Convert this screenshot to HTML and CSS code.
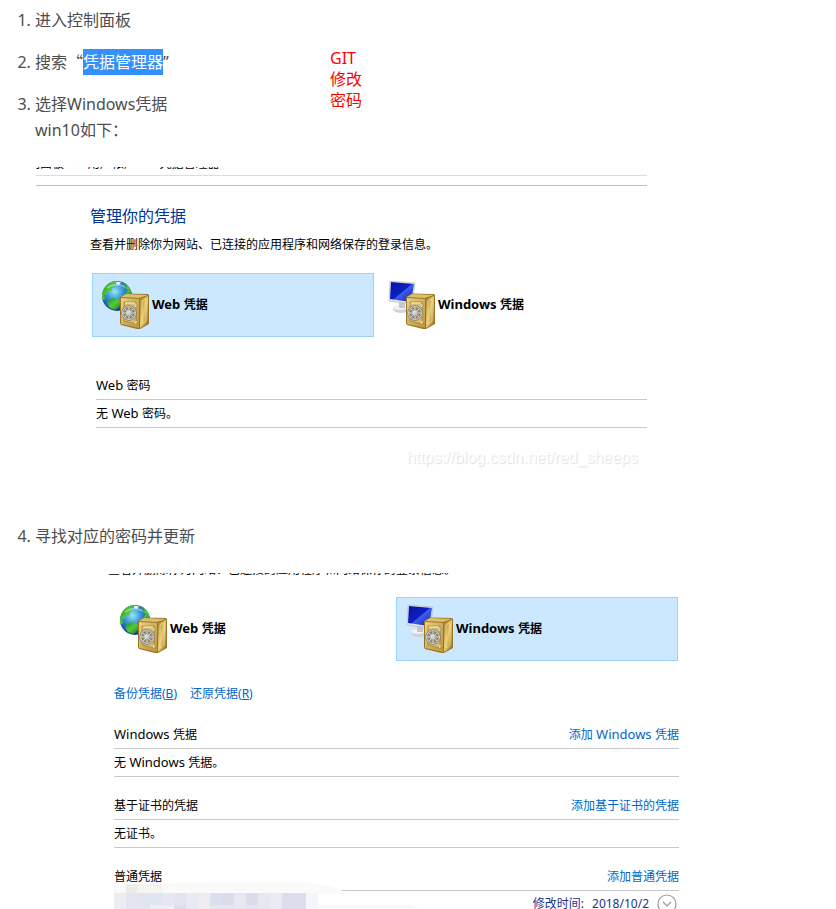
FILE: index.html
```html
<!DOCTYPE html>
<html lang="zh-CN">
<head>
<meta charset="utf-8">
<title>GIT 修改密码</title>
<link rel="stylesheet" href="styles.css">
</head>
<body>
<svg class="defs" aria-hidden="true">
  <defs>
    <radialGradient id="sea" cx=".42" cy=".35" r=".65"><stop offset="0" stop-color="#9be6f8"/><stop offset=".45" stop-color="#3193d6"/><stop offset="1" stop-color="#12368f"/></radialGradient>
    <linearGradient id="land" x1="0" y1="0" x2="1" y2="1"><stop offset="0" stop-color="#1c8f2c"/><stop offset=".5" stop-color="#55c93a"/><stop offset="1" stop-color="#157b27"/></linearGradient>
    <linearGradient id="front" x1="0" y1="0" x2="1" y2="1"><stop offset="0" stop-color="#ead489"/><stop offset=".5" stop-color="#d0b05a"/><stop offset="1" stop-color="#bd963c"/></linearGradient>
    <linearGradient id="side" x1="0" y1="0" x2="1" y2="1"><stop offset="0" stop-color="#a98029"/><stop offset=".5" stop-color="#e6ca74"/><stop offset="1" stop-color="#94701f"/></linearGradient>
    <linearGradient id="screen" x1="0" y1="0" x2="1" y2="1"><stop offset="0" stop-color="#0512a0"/><stop offset=".5" stop-color="#101fc6"/><stop offset=".52" stop-color="#3c62ec"/><stop offset="1" stop-color="#0a16b2"/></linearGradient>
    <linearGradient id="metal" x1="0" y1="0" x2="1" y2="1"><stop offset="0" stop-color="#fafafa"/><stop offset="1" stop-color="#a6abb0"/></linearGradient>
    <clipPath id="disc"><circle cx="16" cy="16" r="15"/></clipPath>
    <symbol id="safe" viewBox="0 0 50 50">
      <path d="M19 17 25 13.500 47 14 48 15V44L39 49 36 49 20 45 19 43Z" fill="#9b7424"/>
      <path d="M20 17 25 14 47 15 38 18Z" fill="#d9bf70"/>
      <path d="M20 18 38 19V48L20 44Z" fill="url(#front)"/>
      <path d="M39 19 47 16V43L39 48Z" fill="url(#side)"/>
      <path d="M41 21 45 19V41L41 44Z" fill="none" stroke="#f8e7a6" stroke-width=".6"/>
      <path d="M23 22 35 22V44L23 41Z" fill="#d9be69" stroke="#a78235" stroke-width=".8"/>
      <path d="M24 23h10" stroke="#fff0b9"/>
      <path d="M35 24v3M35 41v3" stroke="#ddd" stroke-width="1.600"/>
      <path d="M36 24v3M36 42v3" stroke="#8b8470" stroke-width=".8"/>
      <circle cx="28" cy="33" r="6.500" fill="#a18d55" stroke="#777c80" stroke-width="2.400"/>
      <circle cx="28" cy="33" r="6.500" fill="none" stroke="#c8cbce" stroke-width="1.200"/>
      <path d="M28 27v12M22 33h12M24 29l8 8M32 29l-8 8" stroke="#d8dadc"/>
      <circle cx="28" cy="33" r="3" fill="url(#metal)" stroke="#92979a" stroke-width=".6"/>
    </symbol>
    <symbol id="web" viewBox="0 0 50 50">
      <circle cx="16" cy="16" r="15" fill="url(#sea)"/>
      <g clip-path="url(#disc)" fill="url(#land)">
        <path d="M1 17V8L7 1 16 0 14 3 12 4 14 6 11 8 10 11 7 12 5 15 3 15 4 19 1 21Z"/>
        <path d="M22 1 31 8 32 19 28 17 25 13 27 10 24 8 25 5 21 4Z"/>
        <path d="M8 20 12 18 17 19 20 22 18 27 14 30 9 28 6 24Z"/>
        <path d="M15 2h5l-2 3-3-1Z" fill="#e8f7e8"/>
      </g>
      <path d="M6 8Q14 2 24 7" fill="none" stroke="#fff" stroke-opacity=".35" stroke-width="2"/>
      <use href="#safe" width="50" height="50"/>
    </symbol>
    <symbol id="win" viewBox="0 0 50 50">
      <ellipse cx="14" cy="29" rx="8" ry="4" fill="#cfd3d6"/>
      <ellipse cx="13" cy="27.500" rx="7" ry="2.500" fill="#f0f1f2"/>
      <path d="M12 21h6v7h-6z" fill="#c3c8cc"/>
      <path d="M3 1 28 3 25 24 2 21Z" fill="#e2e5e8" stroke="#aeb3b8" stroke-width=".6"/>
      <path d="M4 2 27 4 24 22 3 19Z" fill="url(#screen)"/>
      <use href="#safe" width="50" height="50"/>
    </symbol>
  </defs>
</svg>
<main class="page">
  <div class="intro">
    <ol class="steps">
      <li>进入控制面板</li>
      <li>搜索<span class="wide">“</span><mark>凭据管理器</mark>”</li>
      <li>选择Windows凭据<br>win10如下：</li>
    </ol>
    <p class="note">GIT<br>修改<br>密码</p>
  </div>

  <section class="shot shot-web">
    <div class="strip crumbs"><span>制面板</span><span>›</span><span>用户帐户</span><span>›</span><span>凭据管理器</span></div>
    <div class="bar"></div>
    <div class="content">
      <h2>管理你的凭据</h2>
      <p class="lead">查看并删除你为网站、已连接的应用程序和网络保存的登录信息。</p>
      <div class="tiles">
        <button class="tile selected" type="button"><svg class="icon" aria-hidden="true"><use href="#web"/></svg><span><span class="en">Web </span>凭据</span></button>
        <button class="tile" type="button"><svg class="icon" aria-hidden="true"><use href="#win"/></svg><span><span class="en">Windows </span>凭据</span></button>
      </div>
      <div class="group">
        <div class="row"><span><span class="en">Web </span>密码</span></div>
        <div class="row"><span>无<span class="en"> Web </span>密码。</span></div>
      </div>
    </div>
    <p class="watermark">https://blog.csdn.net/red_sheeps</p>
  </section>

  <ol class="steps" start="4">
    <li>寻找对应的密码并更新</li>
  </ol>

  <section class="shot shot-win">
    <div class="strip">查看并删除你为网站、已连接的应用程序和网络保存的登录信息。</div>
    <div class="tiles">
      <button class="tile" type="button"><svg class="icon" aria-hidden="true"><use href="#web"/></svg><span><span class="en">Web </span>凭据</span></button>
      <button class="tile selected" type="button"><svg class="icon" aria-hidden="true"><use href="#win"/></svg><span><span class="en">Windows </span>凭据</span></button>
    </div>
    <nav class="links"><a href="#">备份凭据(<u>B</u>)</a><a href="#">还原凭据(<u>R</u>)</a></nav>
    <div class="group">
      <div class="row"><span><span class="en">Windows </span>凭据</span><a href="#">添加<span class="en"> Windows </span>凭据</a></div>
      <div class="row"><span>无<span class="en"> Windows </span>凭据。</span></div>
    </div>
    <div class="group">
      <div class="row">基于证书的凭据<a href="#">添加基于证书的凭据</a></div>
      <div class="row">无证书。</div>
    </div>
    <div class="group masked">
      <div class="row">普通凭据<a href="#">添加普通凭据</a></div>
      <div class="entry">
        <span>修改时间:</span><span>2018/10/2</span>
        <button class="expand" type="button" aria-label="展开"><svg viewBox="0 0 20 20" aria-hidden="true"><circle cx="10" cy="10" r="9"/><path d="m6 8 4 4 4-4"/></svg></button>
      </div>
      <svg class="mosaic" viewBox="0 0 305 27" aria-hidden="true">
        <path d="M0 3 50 1 130 0H187L215 4 232 10V12H0Z" fill="#fafafa"/>
        <path d="M0 11H204V23H298L305 27H0Z" fill="#f8f8fa"/>
        <path d="M12 2h12v9H12z" fill="#ececea"/><path d="M24 2h24v9H24z" fill="#f4f4f2"/>
        <path d="M0 11h12v16H0z" fill="#ececf3"/><path d="M12 11h12v16H12z" fill="#e4e5f1"/>
        <path d="M24 11h12v12H24z" fill="#e1e5f2"/><path d="M36 11h12v12H36z" fill="#e1e4f1"/>
        <path d="M48 11h12v12H48z" fill="#e5e7f2"/><path d="M60 11h12v12H60z" fill="#e2e4f0"/>
        <path d="M72 11h12v12H72z" fill="#e8e9f3"/><path d="M84 11h12v16H84z" fill="#eeebf1"/>
        <path d="M96 11h12v12H96z" fill="#d9e1ef"/><path d="M108 11h12v12h-12z" fill="#d9dcea"/>
        <path d="M120 11h12v16h-12z" fill="#e6e8f2"/><path d="M132 11h12v12h-12z" fill="#dadcec"/>
        <path d="M144 11h12v16h-12z" fill="#e6e8f2"/><path d="M156 11h12v16h-12z" fill="#ebecf3"/>
        <path d="M168 11h24v16h-24z" fill="#dcdded"/><path d="M192 11h12v16h-12z" fill="#f5f6fa"/>
        <path d="M24 23h12v4H24z" fill="#e4e5f1"/><path d="M36 23h24v4H36z" fill="#eeeff6"/>
        <path d="M60 23h12v4H60z" fill="#dfdfe9"/><path d="M72 23h12v4H72z" fill="#e9e9f2"/>
        <path d="M96 23h24v4H96z" fill="#e5e6f0"/><path d="M132 23h12v4h-12z" fill="#e4e5f0"/>
      </svg>
    </div>
  </section>
</main>
</body>
</html>
```

FILE: styles.css
```css
* { box-sizing: border-box; }

body {
  margin: 0;
  background: #fff;
  color: #000;
  font: 12px/16px "Noto Sans", "Noto Sans CJK SC", sans-serif;
}

h2, p, ol { margin: 0; padding: 0; }
button { margin: 0; padding: 0; border: 0; background: none; color: inherit; font: inherit; }
a { color: #0066cc; text-decoration: none; }

.defs { position: absolute; width: 0; height: 0; }
.page { max-width: 836px; padding: 7px 0 0 35px; }
.en { font-size: 13px; line-height: 1; }
.wide { font-family: "Noto Sans CJK SC", sans-serif; line-height: 1; }

.intro { display: flex; }
.intro .steps { flex: 0 0 295px; }

.steps {
  display: grid;
  gap: 16px;
  color: #4d4d4d;
  font-size: 16px;
  line-height: 26px;
}

mark { display: inline-block; background: #3390ff; color: #fff; }

.note {
  padding-top: 41px;
  color: #f00;
  font-size: 16px;
  line-height: 21px;
}

.shot { max-width: 100%; margin: 24px 0 0 1px; }

.strip {
  display: flex;
  align-items: flex-end;
  height: 3px;
  overflow: hidden;
  line-height: 12px;
  white-space: nowrap;
}

.shot-web { width: 611px; }
.crumbs { gap: 10px; }
.crumbs span:first-child { margin-left: -8px; }
.bar {
  height: 11px;
  margin-top: 5px;
  border-top: 1px solid #dcdcdc;
  border-bottom: 1px solid #bebebe;
}

.content { padding: 20px 0 0 54px; }
h2 { color: #003399; font-size: 16px; font-weight: 400; line-height: 20px; }
.lead { margin-top: 11px; }

.tiles { display: flex; gap: 4px; }
.content .tiles { margin: 20px 0 0 2px; }
.tile {
  display: flex;
  align-items: center;
  gap: 1px;
  flex: 0 0 282px;
  height: 64px;
  padding-left: 8px;
  border: 1px solid transparent;
  font-weight: 700;
  text-align: left;
}
.content .tile:last-child { flex-shrink: 1; }
.tile.selected { border-color: #99d1ff; background: #cce8ff; }
.icon { flex: none; width: 50px; height: 50px; }

.content .group { margin: 35px 0 0 6px; }
.row {
  display: flex;
  justify-content: space-between;
  height: 28px;
  border-bottom: 1px solid #c8c8c8;
  line-height: 27px;
}

.watermark {
  margin: 20px 9px 0 0;
  color: #fff;
  font: 16px/20px "Liberation Sans", sans-serif;
  text-align: right;
  text-shadow: 1px 1px 1px #ddd;
}

.shot-web + .steps { margin-top: 55px; }

.shot-win { width: 643px; padding-left: 72px; }
.shot-win .tiles { margin: 21px 0 0 2px; }
.links { display: flex; gap: 13px; margin: 25px 0 0 6px; }
.shot-win .group { margin: 15px 0 0 6px; }
.shot-win .links + .group { margin-top: 19px; }

.masked { position: relative; }
.entry {
  display: flex;
  align-items: flex-start;
  justify-content: flex-end;
  gap: 8px;
  height: 18px;
  padding-top: 3px;
  overflow: hidden;
  color: #1e3287;
  line-height: 20px;
}
.expand { width: 20px; height: 20px; margin-right: 2px; }
.expand svg { display: block; fill: none; stroke: #999; stroke-width: 1.2; }
.mosaic { position: absolute; left: 0; bottom: 0; width: 305px; height: 27px; }
```
